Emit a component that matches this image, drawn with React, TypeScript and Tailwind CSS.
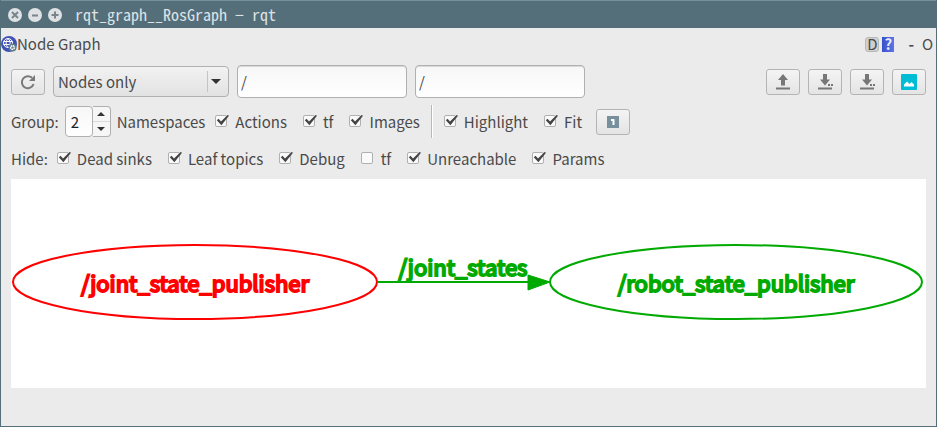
import { useState, type ReactNode } from 'react';

const toolButton =
  'flex h-[26px] w-[34px] shrink-0 items-center justify-center rounded-[3px] border border-[#b4b4b4] bg-linear-to-b from-[#f4f4f4] to-[#e4e4e4]';
const titleButton =
  'flex size-[14px] items-center justify-center rounded-full bg-[#dfe2e4] text-[#78858c]';
const field =
  'h-[33px] w-[170px] rounded-[4px] border border-[#b0b0b0] bg-linear-to-b from-[#f7f7f7] to-white px-[3px] outline-none shadow-[inset_0_1px_0_#d8d8d8]';

function TitleButton({ label, d }: { label: string; d: string }) {
  return (
    <button type="button" aria-label={label} className={titleButton}>
      <svg width="14" height="14" viewBox="0 0 14 14" fill="none" stroke="currentColor" strokeWidth="2">
        <path d={d} />
      </svg>
    </button>
  );
}

function Check({ label, checked = true }: { label: string; checked?: boolean }) {
  return (
    <label className="flex items-center gap-[7px]">
      <span className="grid size-[13px]">
        <input
          type="checkbox"
          defaultChecked={checked}
          className="peer col-start-1 row-start-1 size-[12px] appearance-none rounded-[2px] border border-[#b0b0b0] bg-[#fafafa]"
        />
        <svg
          className="pointer-events-none invisible col-start-1 row-start-1 overflow-visible peer-checked:visible"
          width="13"
          height="13"
          viewBox="0 0 13 13"
          fill="#444"
        >
          <path d="M1.800 5.200 3.600 3.800 6 6.600 12.600 0 14 .8 6.400 10.200Z" />
        </svg>
      </span>
      {label}
    </label>
  );
}

function ToolButton({ label, children }: { label: string; children: ReactNode }) {
  return (
    <button type="button" aria-label={label} className={toolButton}>
      {children}
    </button>
  );
}

function SaveIcon() {
  return (
    <svg width="16" height="16" viewBox="0 0 16 16" fill="#777">
      <path d="M6 0h4v5.500h3L8 11.500 3 5.500h3zM1 13.500h14v2H1zM11 10h2v2h-2zM14 10h2v2h-2z" />
    </svg>
  );
}

function Graph() {
  return (
    <svg
      viewBox="0 0 915 209"
      className="block w-full bg-white font-['Noto_Sans_CJK_SC','Noto_Sans',sans-serif] text-[22px]"
      role="img"
      aria-label="Node graph"
      textAnchor="middle"
    >
      <g stroke="#f00" strokeWidth="2">
        <ellipse cx="184" cy="103" rx="182" ry="37" fill="none" />
        <text x="184" y="113" fill="#f00" strokeWidth="2">/joint_state_publisher</text>
      </g>
      <g stroke="#0a0" strokeWidth="2">
        <path d="M367 103H520" />
        <path d="M517 96 539 103 517 111Z" fill="#0a0" strokeWidth="1" />
        <text x="452" y="97" fill="#0a0" strokeWidth="2">/joint_states</text>
        <ellipse cx="725" cy="103" rx="186" ry="37" fill="none" />
        <text x="725" y="113" fill="#0a0" strokeWidth="2">/robot_state_publisher</text>
      </g>
    </svg>
  );
}

export default function App() {
  const [group, setGroup] = useState(2);
  return (
    <div className="flex min-h-screen flex-col border border-t-0 border-[#546e7a] bg-[#ebebeb] font-['Noto_Sans_CJK_SC','Noto_Sans',sans-serif] text-[15px] leading-[24px] text-[#4a4a4a]">
      <header className="flex h-[28px] items-center gap-[6px] border-t border-[#78909c] bg-[#546e7a] pl-[7px]">
        <TitleButton label="Close" d="M4 4l6 6M10 4l-6 6" />
        <TitleButton label="Minimize" d="M4 7.500h6" />
        <TitleButton label="Maximize" d="M3.500 7h7M7 3.500v7" />
        <h1 className="ml-[7px] pb-[2px] font-['Noto_Sans_Mono_CJK_SC','DejaVu_Sans_Mono',monospace] text-[16px] text-[#dde3e6]">
          rqt_graph__RosGraph − rqt
        </h1>
      </header>

      <div className="flex h-[34px] items-center pb-[2px]">
        <svg width="16" height="16" viewBox="0 0 16 16" fill="none" className="shrink-0">
          <circle cx="8" cy="8" r="8" fill="#3f51b5" />
          <circle cx="7" cy="7" r="4.500" stroke="#fff" />
          <path d="M2.500 5.500h9M2.500 8.500h9M7 2.500c-2.500 3-2.500 6 0 9M7 2.500c2 2 2.500 4 2 6" stroke="#fff" />
          <circle cx="11.500" cy="11.500" r="4" fill="#607d8b" />
          <circle cx="11.500" cy="11.500" r="1.800" stroke="#fff" strokeWidth="1.500" strokeDasharray="1.500 .5" />
        </svg>
        <h2>Node Graph</h2>
        <div className="ml-auto flex items-center pr-[3px]">
          <button type="button" className="flex h-[15px] w-[14px] items-center justify-center rounded-[3px] border border-[#b8b8b8] bg-[#d0d0d0]">D</button>
          <button type="button" aria-label="Help" className="ml-[3px] flex h-[15px] w-[12px] items-center justify-center bg-linear-to-r from-[#3b50c8] to-[#5c74ee] font-bold text-[#e8eaf6]">?</button>
          <button type="button" className="ml-[14px] font-bold">-</button>
          <button type="button" className="ml-[8px] flex h-[12px] w-[11px] items-center justify-center">O</button>
        </div>
      </div>

      <main className="px-[10px]">
        <div className="flex h-[39px] items-center gap-[8px]">
          <ToolButton label="Refresh">
            <svg width="18" height="18" viewBox="0 0 18 18" fill="none">
              <path d="M14.600 11A6 6 0 1 1 13 4.800" stroke="#7a7a7a" strokeWidth="2" />
              <path d="M16 2v6h-6z" fill="#7a7a7a" />
            </svg>
          </ToolButton>
          <div className="grid items-center">
            <select aria-label="Graph type" className="col-start-1 row-start-1 h-[31px] w-[176px] appearance-none rounded-[4px] border border-[#b0b0b0] bg-linear-to-b from-[#f2f2f2] to-[#e2e2e2] pl-[4px] outline-none">
              <option>Nodes only</option>
              <option>Nodes/Topics (active)</option>
              <option>Nodes/Topics (all)</option>
            </select>
            <span className="pointer-events-none col-start-1 row-start-1 flex h-[21px] w-[22px] items-center justify-center justify-self-end border-l border-[#c4c4c4] pr-[6px]">
              <svg width="10" height="5" viewBox="0 0 10 5" fill="#333" className="shrink-0">
                <path d="M0 0h10L5 5z" />
              </svg>
            </span>
          </div>
          <input aria-label="Namespace filter" defaultValue="/" className={field} />
          <input aria-label="Topic filter" defaultValue="/" className={field} />
          <div className="ml-auto flex gap-[8px]">
            <ToolButton label="Load">
              <svg width="16" height="16" viewBox="0 0 16 16" fill="#777">
                <path d="M6 11.500h4V6h3L8 0 3 6h3zM1 13.500h14v2H1z" />
              </svg>
            </ToolButton>
            <ToolButton label="Save as DOT"><SaveIcon /></ToolButton>
            <ToolButton label="Save as SVG"><SaveIcon /></ToolButton>
            <ToolButton label="Save as image">
              <svg width="16" height="16" viewBox="0 0 16 16">
                <rect width="16" height="16" rx="1" fill="#00bcd4" />
                <path d="M3 12.500V10.500L6 7.500 8.500 10 10.500 8 13 10.500V12.500Z" fill="#fff" />
              </svg>
            </ToolButton>
          </div>
        </div>

        <div className="flex h-[41px] items-center gap-[14px]">
          <div className="flex items-center gap-[6px]">
            <label htmlFor="group">Group:</label>
            <div className="flex h-[31px] w-[46px]">
              <input
                id="group"
                inputMode="numeric"
                value={group}
                onChange={(e) => setGroup(Number(e.target.value) || 0)}
                className="w-[28px] rounded-[4px] border border-[#b0b0b0] bg-linear-to-b from-[#f7f7f7] to-white pl-[5px] text-[#222] outline-none"
              />
              <span className="flex w-[18px] flex-col rounded-r-[4px] border border-l-0 border-[#b0b0b0] bg-[#f6f6f6]">
                <button type="button" aria-label="Increase" onClick={() => setGroup(group + 1)} className="flex flex-1 items-center justify-center border-b border-[#dadada]">
                  <svg width="8" height="4" viewBox="0 0 8 4" fill="#333"><path d="M0 4h8L4 0z" /></svg>
                </button>
                <button type="button" aria-label="Decrease" onClick={() => setGroup(Math.max(0, group - 1))} className="flex flex-1 items-center justify-center">
                  <svg width="8" height="4" viewBox="0 0 8 4" fill="#333"><path d="M0 0h8L4 4z" /></svg>
                </button>
              </span>
            </div>
            <span>Namespaces</span>
          </div>
          <div className="-ml-[4px] flex items-center gap-[16px]">
            <Check label="Actions" />
            <Check label="tf" />
            <Check label="Images" />
          </div>
          <div className="-mx-[3px] h-[33px] w-[2px] border-l border-[#b8b8b8] bg-white" />
          <div className="flex items-center gap-[16px]">
            <Check label="Highlight" />
            <Check label="Fit" />
          </div>
          <ToolButton label="Fit in view">
            <svg width="12" height="12" viewBox="0 0 12 12">
              <rect width="12" height="12" fill="#78909c" />
              <path d="M4 3h3.500v6h-2V5H4z" fill="#fff" />
            </svg>
          </ToolButton>
        </div>

        <div className="flex h-[37px] items-center gap-[16px] pb-[4px]">
          <div className="flex items-center gap-[9px]">
            <span>Hide:</span>
            <Check label="Dead sinks" />
          </div>
          <Check label="Leaf topics" />
          <Check label="Debug" />
          <Check label="tf" checked={false} />
          <Check label="Unreachable" />
          <Check label="Params" />
        </div>

        <Graph />
      </main>
    </div>
  );
}
